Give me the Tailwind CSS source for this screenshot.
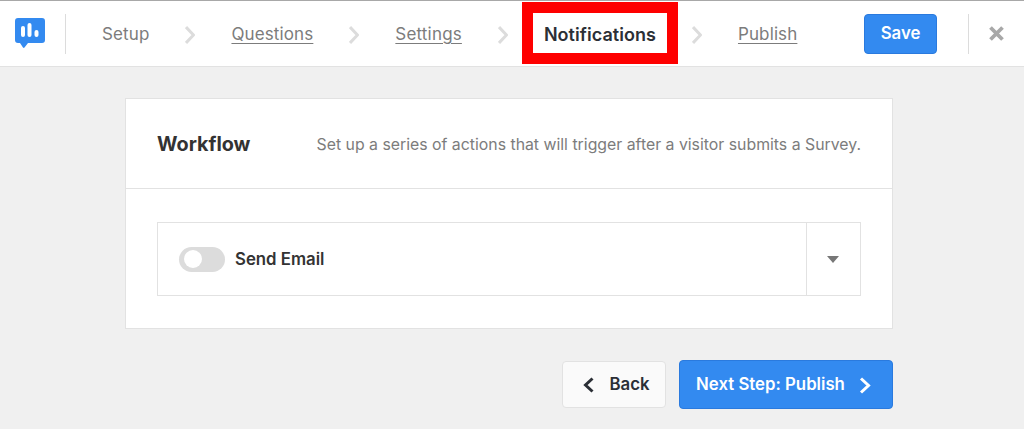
<!DOCTYPE html>
<html lang="en">
<head>
  <meta charset="UTF-8">
  <title>Workflow - Notifications</title>
  <script src="https://cdn.jsdelivr.net/npm/@tailwindcss/browser@4"></script>
</head>
<body class="h-[429px] w-[1024px] overflow-hidden bg-[#f0f0f0] font-['Inter',sans-serif]">

  <header class="flex h-[67px] items-center border-t border-b border-t-[#a8a8a8] border-b-[#e2e2e2] bg-white">
    <div class="flex h-[40px] w-[66px] items-center border-r border-[#dcdcdc] pl-[15px]">
      <svg class="h-[31px] w-[30px]" viewBox="0 0 30 31">
        <path d="M3 0h24a3 3 0 0 1 3 3v19a3 3 0 0 1-3 3H13l-3.500 4.500a1 1 0 0 1-1.500 0L5 25H3a3 3 0 0 1-3-3V3a3 3 0 0 1 3-3z" fill="#338af0"/>
        <rect x="6" y="8" width="4" height="11" rx="2" fill="#fff"/>
        <rect x="12.500" y="5" width="4" height="14" rx="2" fill="#fff"/>
        <rect x="19.500" y="12" width="4" height="7" rx="2" fill="#fff"/>
      </svg>
    </div>

    <nav class="mt-[2px] ml-[36px] flex items-center gap-[36px] text-[17px] tracking-[0.12px] text-[#7c7c7c]">
      <span>Setup</span>
      <svg class="h-[20px] w-[10px]" viewBox="0 0 10 20" fill="none" stroke="#dcdcdc" stroke-width="3"><path d="M1 2l7.500 8L1 18"/></svg>
      <a class="underline underline-offset-3">Questions</a>
      <svg class="h-[20px] w-[10px]" viewBox="0 0 10 20" fill="none" stroke="#dcdcdc" stroke-width="3"><path d="M1 2l7.500 8L1 18"/></svg>
      <a class="tracking-[0.18px] underline underline-offset-3">Settings</a>
      <svg class="h-[20px] w-[10px]" viewBox="0 0 10 20" fill="none" stroke="#dcdcdc" stroke-width="3"><path d="M1 2l7.500 8L1 18"/></svg>
      <span class="relative text-[18px] font-semibold tracking-[0.05px] text-[#2b2f36]">
        Notifications
        <span class="absolute top-[-19px] left-[-21.500px] h-[62px] w-[156px] border-[11px] border-[#fe0000]"></span>
      </span>
      <svg class="h-[20px] w-[10px]" viewBox="0 0 10 20" fill="none" stroke="#dcdcdc" stroke-width="3"><path d="M1 2l7.500 8L1 18"/></svg>
      <a class="underline underline-offset-3">Publish</a>
    </nav>

    <button class="ml-auto h-[40px] w-[73px] rounded-[4px] border border-[#2a7ade] bg-[#338af0] text-[16.800px] font-semibold text-white">Save</button>
    <div class="ml-[31px] h-[40px] w-px bg-[#dcdcdc]"></div>
    <svg class="mr-[20px] ml-[20px] h-[15px] w-[15px]" viewBox="0 0 15 15" stroke="#a8a8a8" stroke-width="3.800"><path d="M1.500 1.500l12 12M13.500 1.500l-12 12"/></svg>
  </header>

  <main class="mx-[125px] w-[768px] pt-[31px]">
    <section class="h-[231px] border border-[#e2e2e2] bg-white">
      <div class="flex h-[90px] items-center justify-between border-b border-[#e2e2e2] px-[31px] pt-[2px]">
        <h2 class="mt-[1px] text-[19.800px] font-bold text-[#333]">Workflow</h2>
        <p class="text-[15.830px] text-[#7c7c7c]">Set up a series of actions that will trigger after a visitor submits a Survey.</p>
      </div>
      <div class="px-[31px] pt-[33px]">
        <div class="flex h-[74px] items-center border border-[#e2e2e2]">
          <div class="ml-[21px] flex h-[25px] w-[46px] items-center rounded-full bg-[#dcdcdc] pl-[5px]">
            <span class="h-[18px] w-[18px] rounded-full bg-white"></span>
          </div>
          <span class="mt-[2px] ml-[10px] text-[16.800px] font-semibold text-[#333]">Send Email</span>
          <div class="ml-auto flex h-full w-[54px] items-center justify-center border-l border-[#e2e2e2] pr-[2px]">
            <svg class="h-[7px] w-[12px]" viewBox="0 0 12 7"><path d="M0 0h12L6 7z" fill="#777"/></svg>
          </div>
        </div>
      </div>
    </section>

    <div class="mt-[31px] flex items-center justify-end gap-[13px]">
      <button class="flex h-[47px] w-[104px] items-center justify-center gap-[15px] rounded-[4px] border border-[#e2e2e2] bg-[#fafafa] pt-[1px] pl-[5px] text-[16.800px] font-semibold text-[#2b2f36]">
        <svg class="h-[16px] w-[11px]" viewBox="0 0 11 16" fill="none" stroke="#2b2f36" stroke-width="3"><path d="M9.500 1.500L2.500 8l7 6.500"/></svg>
        Back
      </button>
      <button class="flex h-[49px] w-[214px] items-center justify-center gap-[14px] rounded-[4px] border border-[#2a7ade] bg-[#338af0] pt-[1px] pr-[5px] text-[16.800px] font-semibold text-white">
        Next Step: Publish
        <svg class="h-[17px] w-[12px]" viewBox="0 0 12 17" fill="none" stroke="#fff" stroke-width="3"><path d="M2 1.500L9.500 8.500l-7.500 7"/></svg>
      </button>
    </div>
  </main>

</body>
</html>
